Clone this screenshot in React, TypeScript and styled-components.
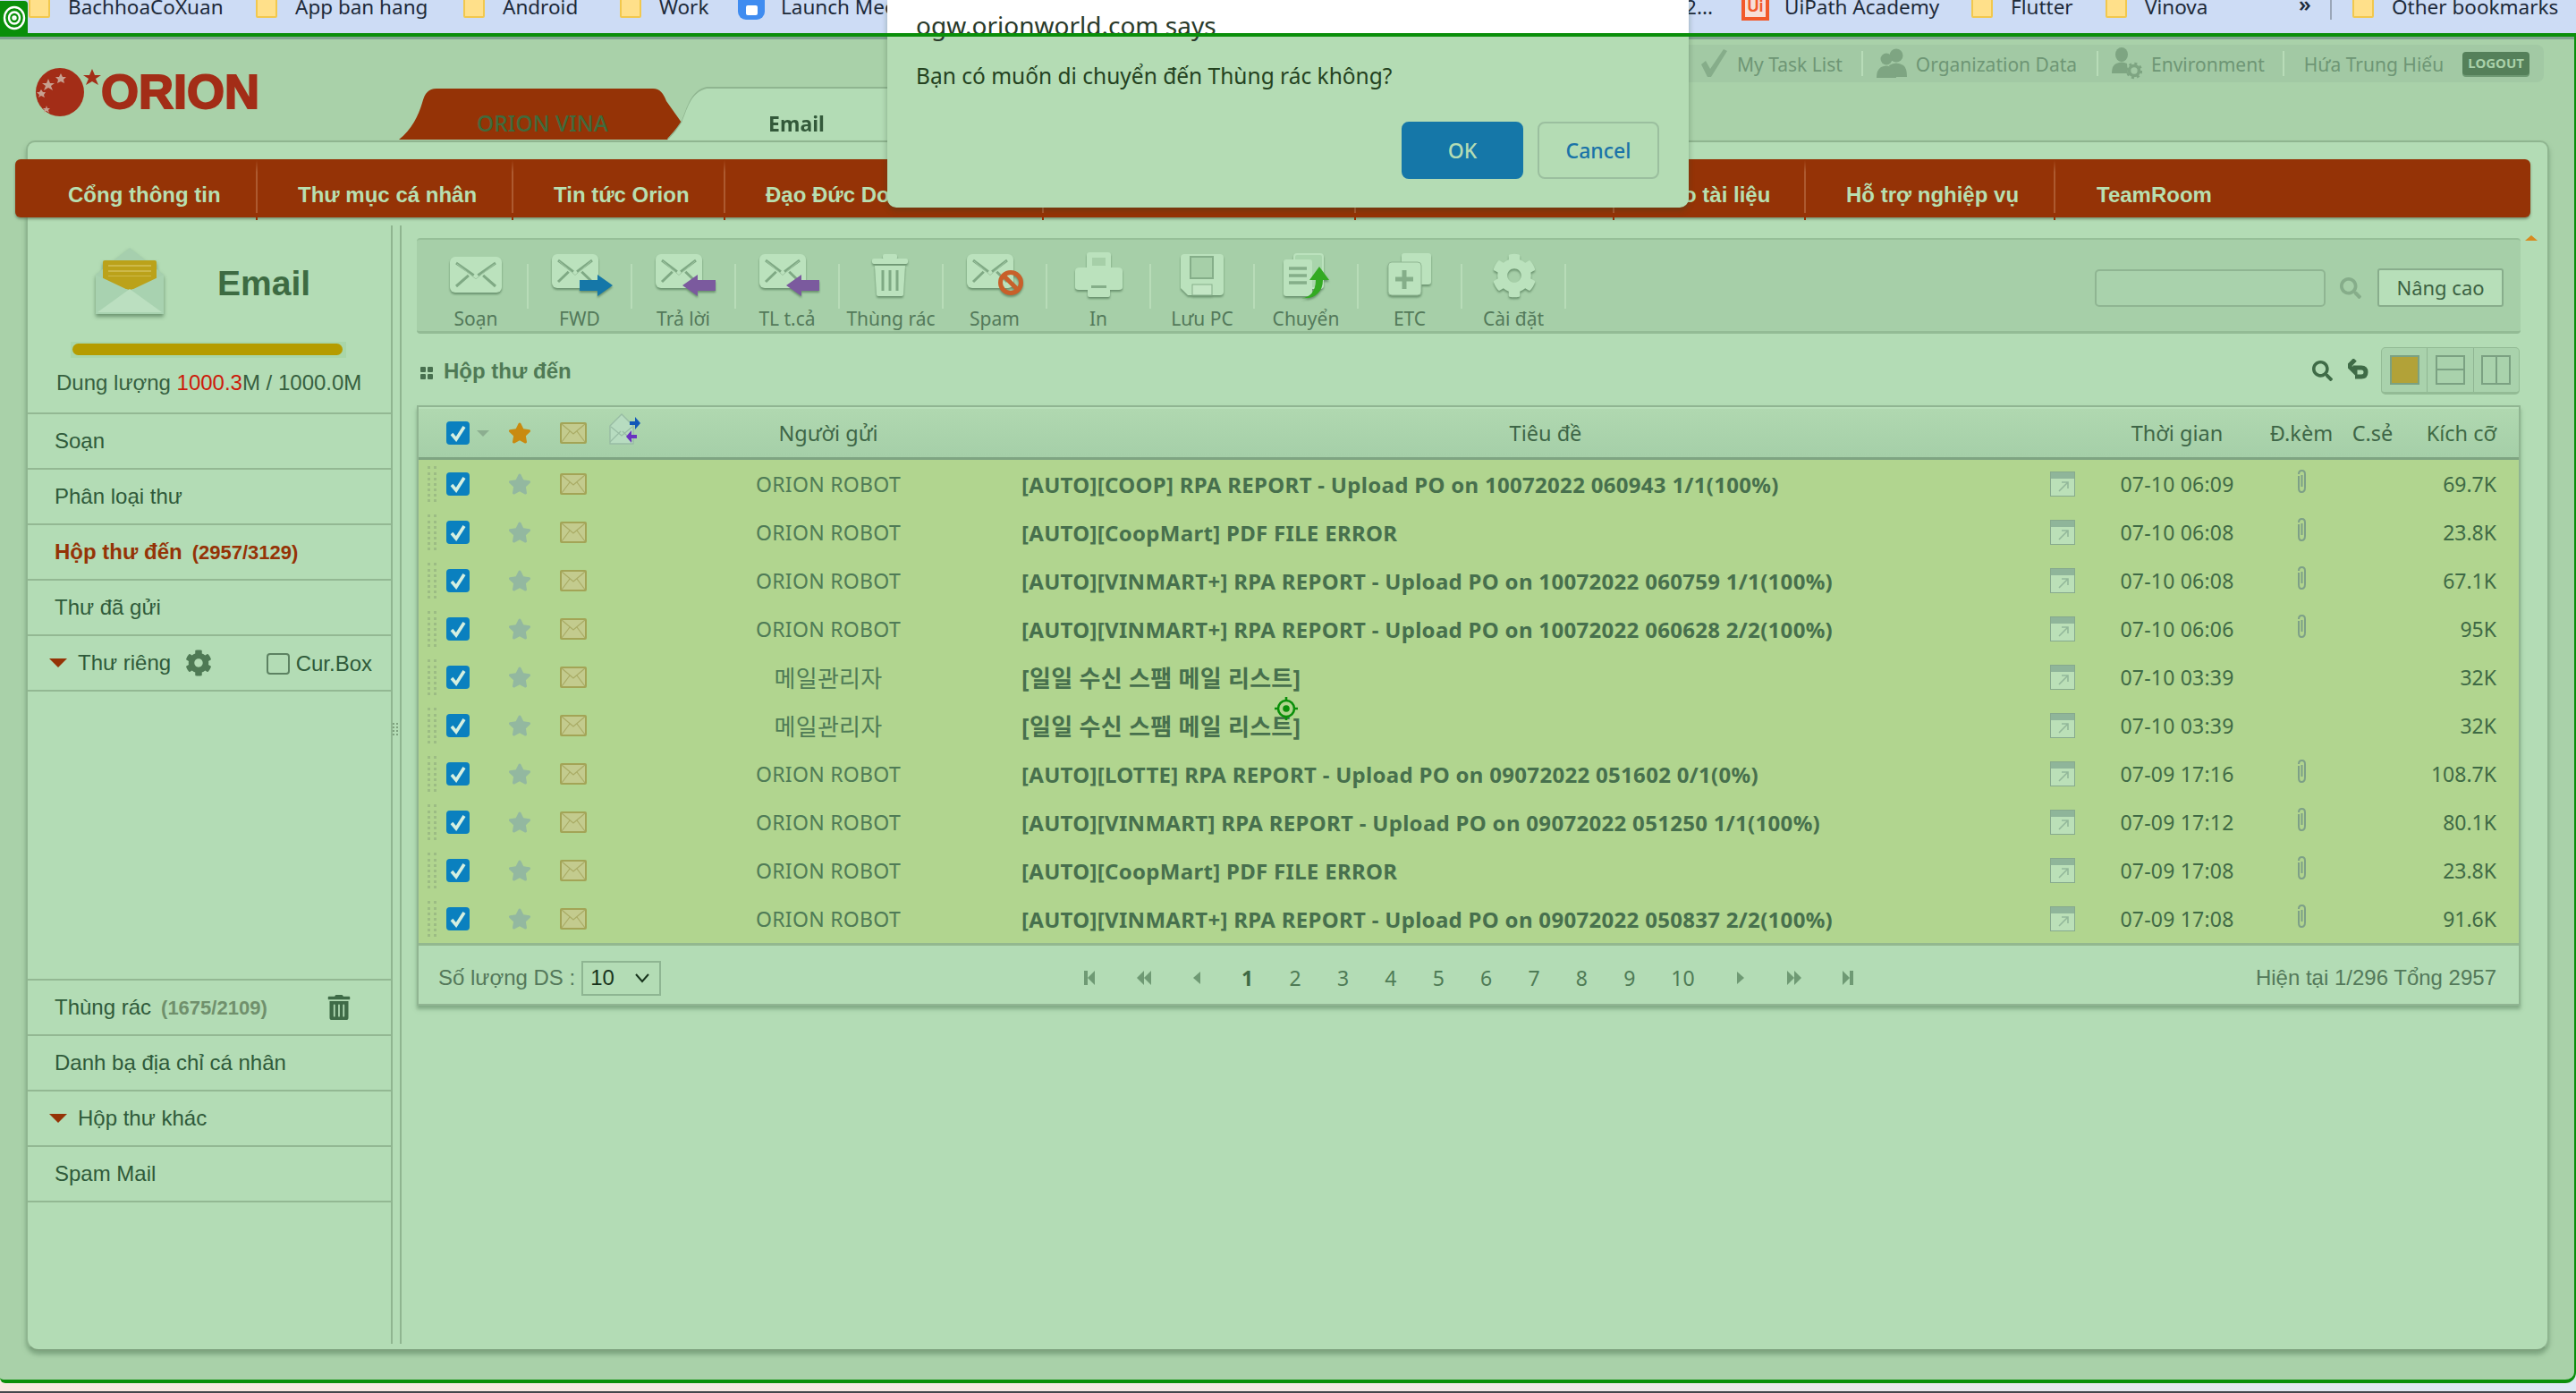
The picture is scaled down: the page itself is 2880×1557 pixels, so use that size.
import React from "react";
import styled, { createGlobalStyle } from "styled-components";
import { FaCog, FaStar, FaTrashAlt, FaSearch } from "react-icons/fa";

const MG = `"Noto Sans", "Noto Sans CJK KR", sans-serif`;
const AR = `"Liberation Sans", Arial, sans-serif`;

const Global = createGlobalStyle`
  html, body { margin: 0; padding: 0; overflow: hidden; background: #f8e8e0; }
  * { box-sizing: border-box; }
`;

const Page = styled.div`
  position: relative; width: 2880px; height: 1557px; overflow: hidden;
  display: flex; flex-direction: column; font-family: ${MG};
  background: linear-gradient(90deg, #f8e8e0 0%, #f4e8e4 50%, #dce8f4 100%);
`;

/* ---------- browser bookmarks ---------- */
const BookmarkBar = styled.div`
  height: 37px; flex: none; background: #cddcf5; display: flex; padding-left: 32px; overflow: hidden;
`;
const Bookmark = styled.div<{ $w?: number; $end?: boolean }>`
  flex: none; width: ${p => (p.$w ? `${p.$w}px` : "auto")}; height: 24px; margin-top: -4px;
  display: flex; align-items: center; gap: 20px; white-space: nowrap;
  justify-content: ${p => (p.$end ? "flex-end" : "flex-start")};
  padding-right: ${p => (p.$end ? "32px" : "0")};
  font-size: 22.5px; color: #1d2a3a; line-height: 24px;
`;
const Folder = styled.span`
  flex: none; width: 24px; height: 26px; margin-top: -2px; background: #ffe08a; border: 2px solid #f2c84c; border-radius: 2px;
`;
const ZoomIcon = styled.span`
  flex: none; align-self: flex-start; width: 30px; height: 26px; background: #3f8cf0; border-radius: 0 0 9px 9px;
  display: flex; align-items: flex-end; justify-content: center; padding-bottom: 5px; margin-right: -2px;
  &::before { content: ""; width: 13px; height: 11px; background: #fff; border-radius: 2px; }
`;
const UiIcon = styled.span`
  flex: none; align-self: flex-start; width: 31px; height: 27px; border: 4px solid #f2592a; border-top: 0;
  color: #f2592a; font: 700 18px/22px ${AR}; text-align: center; background: #f7dfd8; margin-right: -3px;
`;
const Chevrons = styled.span`
  flex: none; width: 35px; font-size: 24px; font-weight: 600; color: #1d2a3a; height: 24px; margin-top: -8px; line-height: 24px;
`;
const BarDivider = styled.span`
  flex: none; width: 2px; height: 22px; background: #9aa6b8; margin-right: 23px;
`;
const TargetBadge = styled.div`
  position: absolute; z-index: 8; left: 0; top: 1px; width: 31px; height: 38px; background: #0a8f0a;
  border-radius: 0 4px 0 0; display: flex; align-items: center; justify-content: center;
`;
const TopLine = styled.div`
  position: absolute; z-index: 7; left: 0; right: 0; top: 37px; height: 4px; background: #0a8f0a;
`;

/* ---------- frame ---------- */
const Frame = styled.div`
  flex: none; height: 1509px; background: #a9d1a9; border-top: 4px solid #0a8f0a; border-right: 2px solid #0a8f0a;
  border-bottom: 4px solid #0a8f0a; border-radius: 0 0 12px 6px; display: flex; flex-direction: column;
`;
const TopEdge = styled.div`
  height: 3px; flex: none; background: #7fa38f;
`;
const Header = styled.div`
  height: 113px; flex: none; display: flex; padding-left: 38px;
`;
const Logo = styled.div`
  flex: none; width: 252px; height: 56px; margin-top: 30px; display: flex; align-items: center; gap: 0;
`;
const LogoWord = styled.span`
  font: 700 54px/54px ${AR}; color: #a32d17; -webkit-text-stroke: 2px #a32d17; margin-left: -1px;
`;
const Tabs = styled.div`
  flex: none; margin-left: 156px; align-self: flex-end; display: flex; height: 58px;
`;
const RedTab = styled.div`
  flex: none; width: 316px; height: 57px; background: #953306; color: #3f6b3c;
  clip-path: path("M0 57 C14 46 22 30 26 16 C29 5 33 0 42 0 L284 0 C292 0 296 6 299 14 L316 38 L300 57 Z");
  font: 500 24.5px/78px ${MG}; text-align: center; padding-left: 5px;
`;
const EmailTabWrap = styled.div`
  flex: none; width: 296px; height: 58px; margin-left: -16px; filter: drop-shadow(0 -1.5px 0 #8fb590);
`;
const EmailTab = styled.div`
  width: 100%; height: 100%; background: #b3dcb5; color: #33593a;
  clip-path: path("M0 58 C8 50 12 44 16 38 C22 24 26 4 44 0 L296 0 L296 58 Z");
  font: 700 23px/78px ${MG}; text-align: center; padding-left: 7px; padding-right: 14px;
`;
const UserBar = styled.div`
  flex: none; margin-left: auto; margin-right: 34px; margin-top: 6px; width: 1044px; height: 42px;
  border-radius: 8px; background: #a2c9a4; display: flex; align-items: center; padding-left: 100px;
  font-size: 21px; color: #6e9675; white-space: nowrap;
`;
const UserText = styled.span<{ $plain?: boolean }>`
  margin-left: ${p => (p.$plain ? 0 : 10)}px; line-height: 42px; padding-top: 2px;
`;
const UserDivider = styled.span<{ $l: number; $r: number }>`
  flex: none; width: 2px; height: 28px; background: #b8dcb8; margin: 0 ${p => p.$r}px 0 ${p => p.$l}px;
`;
const Logout = styled.span`
  flex: none; margin-left: 21px; width: 75px; height: 26px; background: #55805a; border-radius: 4px;
  color: #a9d1a9; font: 700 15px/24px ${MG}; text-align: center; box-shadow: 0 2px 0 #6f9a74;
`;

/* ---------- panel ---------- */
const Panel = styled.div`
  position: relative; flex: none; width: 2821px; height: 1353px; margin-left: 29px; background: #b3dcb5;
  border: 2px solid #8fb590; border-bottom-color: #7fa37f; border-radius: 10px 10px 14px 14px;
  box-shadow: 0 4px 5px rgba(90, 130, 95, .55);
  display: flex; flex-direction: column; padding-top: 19px;
`;
const ScrollUp = styled.span`
  position: absolute; right: 11px; top: 104px; width: 0; height: 0;
  border-left: 7px solid transparent; border-right: 7px solid transparent; border-bottom: 6px solid #d88a20;
`;
const Nav = styled.nav`
  flex: none; height: 65px; width: 2812px; margin-left: -14px; background: #953306; border-radius: 6px;
  display: flex; box-shadow: 0 2px 3px rgba(80, 110, 80, .6);
`;
const NavItem = styled.div<{ $w: number; $pad: number; $last?: boolean }>`
  position: relative; flex: none; width: ${p => p.$w}px; padding-left: ${p => p.$pad}px; padding-top: 7px;
  font: 700 24px/65px ${AR}; color: #b8dfb0; white-space: nowrap;
  &::after {
    content: ""; display: ${p => (p.$last ? "none" : "block")}; position: absolute; right: 0; top: 1px; bottom: -3px; width: 2px;
    background: linear-gradient(#953306, #ad5a30 20%, #ad5a30 88%, #953306 88%);
  }
`;
const Body = styled.div`
  flex: 1; min-height: 0; display: flex; margin-top: 9px; margin-bottom: 6px;
`;

/* ---------- sidebar ---------- */
const Sidebar = styled.aside`
  flex: none; width: 408px; border-right: 2px solid #8fb590; display: flex; flex-direction: column;
`;
const SideHead = styled.div`
  flex: none; height: 211px; border-bottom: 2px solid #93b893; padding-top: 24px;
`;
const SideTitleRow = styled.div`
  display: flex; align-items: center; padding-left: 76px; gap: 60px; height: 78px;
`;
const SideTitle = styled.div`
  font: 700 39px/46px ${AR}; color: #3d6b42; margin-top: 4px;
`;
const StorageTrack = styled.div`
  margin: 28px 0 0 48px; width: 308px; height: 18px; background: #a9d6a9; padding: 2px 4px 3px 2px;
`;
const StorageFill = styled.div`
  height: 13px; background: #b59c00; border-radius: 7px;
`;
const StorageText = styled.div`
  margin: 13px 0 0 32px; font: 24px/30px ${AR}; color: #36603f; white-space: nowrap;
  & b { font-weight: 400; color: #cc1a0a; }
`;
const SideRow = styled.div<{ $active?: boolean }>`
  flex: none; height: 62px; border-bottom: 2px solid #93b893; display: flex; align-items: center; padding: 0 0 1px 30px;
  font: ${p => (p.$active ? 700 : 400)} 24px/30px ${AR}; color: ${p => (p.$active ? "#953306" : "#2f5a3a")}; white-space: nowrap;
`;
const Count = styled.span<{ $muted?: boolean }>`
  font: 700 22px/30px ${AR}; margin-left: 11px; color: ${p => (p.$muted ? "#70906c" : "#953306")}; padding-top: 3px;
`;
const SideSpacer = styled.div`
  flex: none; height: 323px; border-bottom: 2px solid #93b893;
`;
const Caret = styled.span`
  flex: none; width: 0; height: 0; margin: 0 12px 0 -6px;
  border-left: 10px solid transparent; border-right: 10px solid transparent; border-top: 10px solid #953306;
`;
const GearWrap = styled.span`
  display: flex; margin-left: 16px; color: #4f7a55; font-size: 30px;
`;
const CurBoxWrap = styled.label`
  margin-left: auto; display: flex; align-items: center; margin-right: 21px; padding-top: 3px;
`;
const CurBox = styled.span`
  width: 26px; height: 24px; border: 2px solid #5d8262; border-radius: 4px; margin-right: 7px; background: transparent;
`;
const TrashWrap = styled.span`
  display: flex; margin-left: auto; margin-right: 44px; color: #3f6b47; font-size: 28px;
`;

/* ---------- splitter ---------- */
const Splitter = styled.div`
  flex: none; width: 10px; border-right: 2px solid #8fb590; display: flex; align-items: center; justify-content: center;
  padding-bottom: 124px; padding-right: 2px;
  &::before { content: ""; width: 5px; height: 14px; border-left: 2px dotted #7fa37f; border-right: 2px dotted #7fa37f; }
`;

/* ---------- content ---------- */
const Content = styled.main`
  flex: none; width: 2399px; padding: 14px 30px 0 17px;
`;
const Toolbar = styled.div`
  height: 107px; background: #a6cfa8; border-radius: 4px; border-top: 2px solid #96bf98; border-bottom: 3px solid #93bb95;
  display: flex; padding-left: 9px; align-items: flex-start;
`;
const Tool = styled.div`
  position: relative; flex: none; width: 116px; padding-top: 15px; text-align: center;
  &::after { content: ""; position: absolute; right: 0; top: 27px; width: 2px; height: 50px; background: #b8dcb8; }
`;
const ToolIcon = styled.svg`
  display: block; width: 116px; height: 52px; overflow: visible; filter: drop-shadow(0 2px 1px rgba(90, 130, 95, .8));
`;
const ToolLabel = styled.div`
  margin-top: 7px; font-size: 21px; line-height: 28px; color: #53795a; white-space: nowrap; padding-right: 2px;
`;
const SearchArea = styled.div`
  margin-left: auto; margin-right: 19px; margin-top: 32px; display: flex; align-items: center;
`;
const SearchInput = styled.div`
  width: 258px; height: 42px; border: 2px solid #8fb592; border-radius: 5px; background: #a9d2ac;
`;
const SearchGlass = styled.span`
  display: flex; color: #86ad8a; font-size: 24px; margin: 0 18px 0 16px;
`;
const Advanced = styled.div`
  width: 141px; height: 43px; border: 2px solid #88ad8c; border-radius: 3px; background: #b7dfb9; color: #3c6243;
  font-size: 22px; line-height: 38px; text-align: center;
`;
const TitleRow = styled.div`
  height: 80px; display: flex; align-items: center; padding: 0 1px 0 4px;
`;
const Title = styled.div`
  font: 700 24px/30px ${AR}; color: #4f7a55; display: flex; align-items: center; gap: 11px; margin-top: 4px;
`;
const Bullet = styled.span`
  width: 15px; height: 14px; display: grid; grid-template-columns: 6px 6px; gap: 2px; margin-top: 3px;
  &::before, &::after { content: ""; height: 6px; background: #48704f; border-radius: 1px; box-shadow: 0 8px 0 #48704f; }
`;
const Tools = styled.div`
  margin-left: auto; display: flex; align-items: center; margin-top: 2px;
`;
const TitleGlass = styled.span`
  display: flex; color: #3f6b47; font-size: 23px; margin-right: 17px;
`;
const ViewGroup = styled.div`
  margin-left: 13px; width: 155px; height: 53px; background: #a9d2ac; border: 1px solid #93bb95; border-bottom-width: 3px; border-radius: 5px; display: flex;
`;
const ViewCell = styled.div<{ $last?: boolean }>`
  flex: 1; display: flex; align-items: center; justify-content: center; border-right: ${p => (p.$last ? "0" : "1px solid #8fb592")};
`;
const ViewBox = styled.div<{ $kind: "full" | "rows" | "cols" }>`
  width: 33px; height: 33px; border: 2px solid #7ba182;
  background: ${p =>
    p.$kind === "full" ? "#b2a238" :
    p.$kind === "rows" ? "linear-gradient(#7ba182,#7ba182) 0 50%/100% 2px no-repeat" :
    "linear-gradient(#7ba182,#7ba182) 50% 0/2px 100% no-repeat"};
`;

/* ---------- table ---------- */
const Table = styled.div`
  height: 671px; border: 2px solid #90b592; box-shadow: 0 4px 4px rgba(90, 130, 95, .55); display: flex; flex-direction: column;
`;
const cols = "29px 63px 58px 62px 110px 272px 1218px 70px 168px 110px 49px 139px";
const HeadRow = styled.div`
  flex: none; height: 59px; display: grid; grid-template-columns: ${cols}; align-items: center;
  background: linear-gradient(#b0d8b0, #a5cfa8); border-bottom: 3px solid #7ea482; border-top: 2px solid #b8dfb9;
  font-size: 23.5px; color: #3e6647; white-space: nowrap;
`;
const DataRow = styled.div`
  flex: none; height: 54px; display: grid; grid-template-columns: ${cols}; align-items: center; background: #b1d58f;
  font-size: 23px; color: #4f7b56; white-space: nowrap;
`;
const Rows = styled.div`
  flex: none; border-bottom: 3px solid #93b88f;
`;
const Handle = styled.span`
  display: block; width: 10px; height: 40px; margin-left: 10px;
  border-left: 3px dotted #9cbc84; border-right: 3px dotted #9cbc84;
`;
const CheckBox = styled.span`
  display: flex; align-items: center; justify-content: center; width: 26px; height: 26px; margin-left: 2px;
  background: #0a80bf; border-radius: 4px;
`;
const Centered = styled.span`
  text-align: center; display: block;
`;
const Sender = styled.span<{ $ko: boolean }>`
  text-align: center; display: block; font-size: ${p => (p.$ko ? 26 : 23)}px; letter-spacing: .3px;
`;
const Subject = styled.span<{ $ko: boolean }>`
  padding-left: 80px; font-weight: 700; font-size: ${p => (p.$ko ? 26 : 24)}px; letter-spacing: .3px; color: #47704d;
`;
const HeadSubject = styled.span`
  padding-left: 114px; text-align: center; display: block;
`;
const Time = styled.span`
  text-align: center; display: block; color: #3f6a45; font-size: 23px; letter-spacing: .2px;
`;
const Size = styled.span`
  text-align: right; display: block; padding-right: 25px; color: #3f6a45;
`;
const StarWrap = styled.span<{ $head?: boolean }>`
  display: flex; margin-left: 8px; font-size: 26px; color: ${p => (p.$head ? "#c98a10" : "#93b8a0")};
`;
const CheckHeadWrap = styled.span`
  display: flex; align-items: center; gap: 8px;
`;
const SortCaret = styled.span`
  width: 0; height: 0; border-left: 7px solid transparent; border-right: 7px solid transparent; border-top: 7px solid #8cae90;
`;
const EnvBox = styled.span<{ $l?: number }>`
  display: flex; margin-left: ${p => p.$l ?? 8}px;
`;
const Footer = styled.div`
  flex: 1; display: grid; grid-template-columns: 720px 1fr auto; align-items: center; color: #507a57; font-size: 23px;
  background: #b3dcb5; white-space: nowrap; padding-top: 7px;
`;
const PerPage = styled.div`
  display: flex; align-items: center; padding-left: 22px; font: 24px/30px ${AR}; color: #54785a;
`;
const Select = styled.div`
  margin-left: 7px; width: 89px; height: 39px; border: 2px solid #8eb592; display: flex; align-items: center;
  justify-content: space-between; padding: 0 10px 0 8px; color: #17331c; font: 24px/30px ${AR};
`;
const Pager = styled.div`
  display: flex; align-items: center; padding-left: 1px;
`;
const PageCell = styled.div<{ $w: number; $on?: boolean }>`
  flex: none; width: ${p => p.$w}px; display: flex; justify-content: center; font-size: 23px;
  font-weight: ${p => (p.$on ? 700 : 400)}; color: ${p => (p.$on ? "#3f6a45" : "#4f7b56")};
`;
const Total = styled.div`
  padding-right: 25px; font: 24px/30px ${AR}; color: #53795a;
`;

/* ---------- dialog ---------- */
const Dialog = styled.div`
  position: absolute; z-index: 6; left: 992px; top: 0; width: 896px; height: 232px; background: #b4dcb4;
  border-radius: 0 0 10px 10px; box-shadow: 0 3px 6px rgba(40, 70, 40, .35);
`;
const DialogHead = styled.div`
  height: 41px; background: linear-gradient(#fff 37px, #b4dcb4 37px); padding-left: 32px;
  font-size: 28px; line-height: 56px; color: #2a3a2a; white-space: nowrap;
`;
const DialogMsg = styled.div`
  margin: 28px 0 0 32px; font-size: 24.5px; line-height: 32px; color: #24421f; white-space: nowrap;
`;
const DialogBtns = styled.div`
  margin-top: 35px; padding-right: 33px; display: flex; justify-content: flex-end; gap: 16px;
`;
const DialogBtn = styled.div<{ $primary?: boolean }>`
  width: 136px; height: 64px; border-radius: 8px; text-align: center; font-size: 23px; font-weight: 500; line-height: 60px;
  background: ${p => (p.$primary ? "#1577a8" : "#b4dcb4")}; color: ${p => (p.$primary ? "#b4dcb4" : "#1a73a8")};
  border: 2px solid ${p => (p.$primary ? "#1577a8" : "#9bbf9f")};
`;
const Cursor = styled.svg`
  position: absolute; z-index: 9; left: 1424px; top: 778px; width: 28px; height: 28px;
`;
const Bottom = styled.div`
  flex: 1; display: flex; flex-direction: column; justify-content: flex-end;
  &::after { content: ""; height: 2px; background: #44474c; }
`;

/* ---------- drawings ---------- */
const Env = ({ x, y, w, h }: { x: number; y: number; w: number; h: number }) => (
  <g transform={`translate(${x} ${y})`}>
    <rect width={w} height={h} rx="6" fill="#bbe2bd" />
    <path d={`M7 7 L${w * 0.46} ${h * 0.52} M${w - 7} 7 L${w * 0.54} ${h * 0.52} M7 ${h - 7} L${w * 0.36} ${h * 0.52} M${w - 7} ${h - 7} L${w * 0.64} ${h * 0.52}`} stroke="#7fa984" strokeWidth="3" fill="none" />
    <path d={`M8 8 L${w / 2} ${h * 0.62} L${w - 8} 8`} stroke="#9fc7a2" strokeWidth="1" fill="none" />
  </g>
);
const ArrowR = ({ x, y, c }: { x: number; y: number; c: string }) => (
  <polygon transform={`translate(${x} ${y})`} points="0,6 20,6 20,0 37,12 20,24 20,18 0,18" fill={c} />
);
const ArrowL = ({ x, y, c }: { x: number; y: number; c: string }) => (
  <polygon transform={`translate(${x} ${y})`} points="37,6 17,6 17,0 0,12 17,24 17,18 37,18" fill={c} />
);
const toolIcons: Record<string, React.ReactNode> = {
  compose: <Env x={28} y={4} w={58} h={40} />,
  fwd: <><Env x={26} y={1} w={52} h={38} /><ArrowR x={57} y={24} c="#1577a8" /></>,
  reply: <><Env x={26} y={1} w={52} h={38} /><ArrowL x={56} y={24} c="#7b5a9e" /></>,
  trash: (
    <g fill="#bbe2bd">
      <rect x="36" y="6" width="40" height="6" rx="2" /><rect x="48" y="1" width="16" height="6" rx="2" />
      <path d="M39 14 H73 L71 46 Q71 48 68 48 H44 Q41 48 41 46 Z" />
      <path d="M48 19 V42 M56 19 V42 M64 19 V42" stroke="#7fa984" strokeWidth="3" />
    </g>
  ),
  spam: (
    <>
      <Env x={26} y={1} w={52} h={38} />
      <circle cx="75" cy="33" r="11.5" fill="none" stroke="#c8602a" strokeWidth="5" />
      <path d="M67 25 L83 41" stroke="#c8602a" strokeWidth="5" />
    </>
  ),
  print: (
    <g>
      <path d="M31 20 Q31 16 36 16 H79 Q84 16 84 20 V38 Q84 41 80 41 H35 Q31 41 31 38 Z" fill="#bbe2bd" />
      <rect x="44" y="-1" width="27" height="20" rx="3" fill="#bbe2bd" /><rect x="50" y="5" width="15" height="9" fill="#a6cfa8" />
      <rect x="45" y="34" width="25" height="15" rx="2" fill="#bbe2bd" /><rect x="49" y="36" width="17" height="3" fill="#85ae89" />
    </g>
  ),
  save: (
    <g>
      <path d="M33 5 Q33 1 37 1 H77 Q81 1 81 5 V43 Q81 47 77 47 H41 L33 39 Z" fill="#bbe2bd" />
      <rect x="44" y="4" width="25" height="24" fill="#a6cfa8" stroke="#85ae89" strokeWidth="2" />
      <rect x="46" y="35" width="22" height="12" fill="#c4e6c5" stroke="#85ae89" strokeWidth="1" />
    </g>
  ),
  move: (
    <g>
      <rect x="44" y="1" width="32" height="38" rx="3" fill="#a9d5ac" stroke="#bbe2bd" strokeWidth="2" />
      <rect x="32" y="7" width="32" height="41" rx="3" fill="#bbe2bd" />
      <path d="M38 17 H58 M38 25 H58 M38 33 H58" stroke="#85ae89" strokeWidth="3.5" />
      <path d="M52 50 C62 50 68 42 68 30 H61 L72 15 L83 30 H76 C76 44 66 52 52 50 Z" fill="#33aa22" />
    </g>
  ),
  etc: (
    <g>
      <rect x="48" y="0" width="33" height="35" rx="3" fill="#bbe2bd" />
      <rect x="33" y="10" width="37" height="37" rx="4" fill="#bbe2bd" stroke="#8fb592" strokeWidth="1" />
      <path d="M51 19 V40 M41 29 H61" stroke="#85ae89" strokeWidth="5" />
    </g>
  ),
};
const Clip = () => (
  <svg width="14" height="28" viewBox="0 0 14 28" fill="none" stroke="#7da087" strokeWidth="2">
    <path d="M4 8 V21 Q4 26 7 26 Q11 26 11 21 V6 Q11 2 7.5 2 Q4 2 4 6" /><path d="M7.5 7 V20" />
  </svg>
);
const OpenIcon = () => (
  <svg width="28" height="28" viewBox="0 0 28 28">
    <rect x="0" y="0" width="28" height="28" fill="#bbe0b8" stroke="#86a98e" strokeWidth="2" />
    <rect x="1" y="1" width="26" height="7" fill="#8fb59a" />
    <path d="M10 22 L20 12 M13 12 H20 V19" stroke="#93b89a" strokeWidth="1.6" fill="none" />
  </svg>
);
const MailIcon = () => (
  <svg width="30" height="24" viewBox="0 0 30 24">
    <rect x="1" y="1" width="28" height="22" rx="1" fill="#c3cb8e" stroke="#a3a456" strokeWidth="2" />
    <path d="M2 2 L15 13 L28 2 M2 22 L11 10 M28 22 L19 10" stroke="#a9ab65" strokeWidth="1.2" fill="none" />
  </svg>
);
const Tick = () => (
  <svg width="20" height="20" viewBox="0 0 20 20">
    <path d="M3 11 L8 17 L17 3" stroke="#d5efe0" strokeWidth="3.6" fill="none" />
  </svg>
);
const InOut = () => (
  <svg width="36" height="42" viewBox="0 0 36 42">
    <path d="M2 16 L15 3 L28 16 V36 H2 Z" fill="#b7dcc0" stroke="#98bca4" strokeWidth="1.4" />
    <path d="M2 34 L14 22 M28 34 L16 22 M3 17 L15 27 L27 17" stroke="#98bca4" strokeWidth="1.2" fill="none" />
    <polygon points="24,11 30,11 30,6 36,13 30,20 30,15 24,15" fill="#1158b8" />
    <polygon points="32,26 26,26 26,21 20,28 26,35 26,30 32,30" fill="#6a32c0" />
  </svg>
);
const GroupIcon = () => (
  <svg width="34" height="34" viewBox="0 0 34 34" fill="#7ea582">
    <circle cx="22" cy="8" r="7.5" />
    <path d="M14 19 Q22 14 30 19 Q34 22 34 32 H20 Z" />
    <circle cx="11" cy="12" r="6.5" />
    <path d="M0 33 Q0 24 5 21 Q11 18 17 21 Q22 24 22 33 Z" />
  </svg>
);
const PersonGearIcon = () => (
  <svg width="34" height="36" viewBox="0 0 34 36" fill="#7ea582">
    <ellipse cx="11" cy="8" rx="7" ry="8" />
    <path d="M0 29 Q0 20 5 18 Q11 15 17 18 L18 29 Z" />
    <circle cx="25" cy="26" r="5.5" fill="none" stroke="#7ea582" strokeWidth="3.6" />
    <circle cx="25" cy="26" r="8" fill="none" stroke="#7ea582" strokeWidth="2.4" strokeDasharray="3 3.3" />
  </svg>
);
const PagerIcon = ({ k }: { k: "first" | "prev2" | "prev" | "next" | "next2" | "last" }) => {
  const base = {
    first: <><rect x="3" y="2" width="4" height="16" /><polygon points="15,2 15,18 7,10" /></>,
    prev2: <><polygon points="11,2 11,18 3,10" /><polygon points="19,2 19,18 11,10" /></>,
    prev: <polygon points="14,3 14,17 6,10" />,
    next: <polygon points="6,3 6,17 14,10" />,
    next2: <><polygon points="1,2 1,18 9,10" /><polygon points="9,2 9,18 17,10" /></>,
    last: <><polygon points="5,2 5,18 13,10" /><rect x="13" y="2" width="4" height="16" /></>,
  }[k];
  return <svg width="20" height="20" viewBox="0 0 20 20" fill="#6f9a74">{base}</svg>;
};

/* ---------- data ---------- */
const navItems = [
  ["Cổng thông tin", 271, 59], ["Thư mục cá nhân", 286, 45], ["Tin tức Orion", 237, 45], ["Đạo Đức Doanh Nghiệp", 356, 45],
  ["Quản lý công việc", 349, 45], ["Sổ tay Orion", 289, 45], ["Kho tài liệu", 214, 45], ["Hỗ trợ nghiệp vụ", 279, 45],
] as const;
const tools = [
  ["compose", "Soạn"], ["fwd", "FWD"], ["reply", "Trả lời"], ["reply", "TL t.cả"], ["trash", "Thùng rác"], ["spam", "Spam"],
  ["print", "In"], ["save", "Lưu PC"], ["move", "Chuyển"], ["etc", "ETC"], ["gear", "Cài đặt"],
];
const rows = [
  ["ORION ROBOT", "[AUTO][COOP] RPA REPORT - Upload PO on 10072022 060943 1/1(100%)", "07-10 06:09", true, "69.7K"],
  ["ORION ROBOT", "[AUTO][CoopMart] PDF FILE ERROR", "07-10 06:08", true, "23.8K"],
  ["ORION ROBOT", "[AUTO][VINMART+] RPA REPORT - Upload PO on 10072022 060759 1/1(100%)", "07-10 06:08", true, "67.1K"],
  ["ORION ROBOT", "[AUTO][VINMART+] RPA REPORT - Upload PO on 10072022 060628 2/2(100%)", "07-10 06:06", true, "95K"],
  ["메일관리자", "[일일 수신 스팸 메일 리스트]", "07-10 03:39", false, "32K"],
  ["메일관리자", "[일일 수신 스팸 메일 리스트]", "07-10 03:39", false, "32K"],
  ["ORION ROBOT", "[AUTO][LOTTE] RPA REPORT - Upload PO on 09072022 051602 0/1(0%)", "07-09 17:16", true, "108.7K"],
  ["ORION ROBOT", "[AUTO][VINMART] RPA REPORT - Upload PO on 09072022 051250 1/1(100%)", "07-09 17:12", true, "80.1K"],
  ["ORION ROBOT", "[AUTO][CoopMart] PDF FILE ERROR", "07-09 17:08", true, "23.8K"],
  ["ORION ROBOT", "[AUTO][VINMART+] RPA REPORT - Upload PO on 09072022 050837 2/2(100%)", "07-09 17:08", true, "91.6K"],
] as const;

export default function App() {
  return (
    <Page>
      <Global />
      <BookmarkBar>
        <Bookmark $w={254}><Folder />BachhoaCoXuan</Bookmark>
        <Bookmark $w={232}><Folder />App ban hang</Bookmark>
        <Bookmark $w={175}><Folder />Android</Bookmark>
        <Bookmark $w={132}><Folder />Work</Bookmark>
        <Bookmark $w={435}><ZoomIcon />Launch Meeting</Bookmark>
        <Bookmark $w={687} $end>Report 2...</Bookmark>
        <Bookmark $w={257}><UiIcon>Ui</UiIcon>UiPath Academy</Bookmark>
        <Bookmark $w={150}><Folder />Flutter</Bookmark>
        <Bookmark $w={216}><Folder />Vinova</Bookmark>
        <Chevrons>»</Chevrons>
        <BarDivider />
        <Bookmark><Folder />Other bookmarks</Bookmark>
      </BookmarkBar>
      <TargetBadge>
        <svg width="26" height="28" viewBox="0 0 26 28" fill="none" stroke="#fff" strokeWidth="2.4">
          <ellipse cx="13" cy="14" rx="11" ry="12" /><ellipse cx="13" cy="14" rx="6" ry="6.5" /><circle cx="13" cy="14" r="1.5" />
        </svg>
      </TargetBadge>
      <TopLine />
      <Frame>
        <TopEdge />
        <Header>
          <Logo>
            <svg width="76" height="56" viewBox="0 0 76 56">
              <circle cx="29" cy="29" r="27" fill="#a32d17" />
              <g fill="#c7a090">
                <polygon points="16,14 18,19 23,19 19,22 21,27 16,24 11,27 13,22 9,19 14,19" />
                <polygon points="30,8 32,12 36,12 33,15 34,19 30,17 26,19 27,15 24,12 28,12" />
                <polygon points="8,26 10,29 13,29 11,32 12,35 8,33 5,35 6,32 3,29 6,29" />
                <polygon points="14,44 15,47 18,47 16,49 17,52 14,50 11,52 12,49 10,47 13,47" />
              </g>
              <polygon points="65,3 68,10 75,10 69,14 72,21 65,17 58,21 61,14 55,10 62,10" fill="#a32d17" />
            </svg>
            <LogoWord>ORION</LogoWord>
          </Logo>
          <Tabs>
            <RedTab>ORION VINA</RedTab>
            <EmailTabWrap><EmailTab>Email</EmailTab></EmailTabWrap>
          </Tabs>
          <UserBar>
            <svg width="32" height="32" viewBox="0 0 32 32"><path d="M2 17 L7 13 L12 22 L27 0 L31 2 L13 31 L9 31 Z" fill="#86ad8a" /></svg>
            <UserText>My Task List</UserText>
            <UserDivider $l={21} $r={15} />
            <GroupIcon />
            <UserText>Organization Data</UserText>
            <UserDivider $l={22} $r={15} />
            <PersonGearIcon />
            <UserText>Environment</UserText>
            <UserDivider $l={20} $r={22} />
            <UserText $plain>Hứa Trung Hiếu</UserText>
            <Logout>LOGOUT</Logout>
          </UserBar>
        </Header>
        <Panel>
          <ScrollUp />
          <Nav>
            {navItems.map(([t, w, pad]) => <NavItem key={t} $w={w} $pad={pad}>{t}</NavItem>)}
            <NavItem $w={530} $pad={46} $last>TeamRoom</NavItem>
          </Nav>
          <Body>
            <Sidebar>
              <SideHead>
                <SideTitleRow>
                  <svg width="76" height="76" viewBox="0 0 76 76" style={{ filter: "drop-shadow(0 3px 2px rgba(90,130,95,.8))" }}>
                    <path d="M38 0 L76 30 V72 Q76 74 73 74 H3 Q0 74 0 72 V30 Z" fill="#a6cfae" />
                    <rect x="8" y="14" width="60" height="32" rx="2" fill="#bba21a" />
                    <path d="M14 20 H62 M14 26 H62 M14 32 H62" stroke="#cdb949" strokeWidth="2" />
                    <path d="M8 40 L38 47 L68 40 V32 H8 Z" fill="#bba21a" />
                    <path d="M0 30 L38 48 L76 30 V74 H0 Z" fill="#a8d2b0" />
                    <path d="M2 72 L38 46 L74 72 Z" fill="#bbdfc0" />
                  </svg>
                  <SideTitle>Email</SideTitle>
                </SideTitleRow>
                <StorageTrack><StorageFill /></StorageTrack>
                <StorageText>Dung lượng <b>1000.3</b>M / 1000.0M</StorageText>
              </SideHead>
              <SideRow>Soạn</SideRow>
              <SideRow>Phân loại thư</SideRow>
              <SideRow $active>Hộp thư đến<Count>(2957/3129)</Count></SideRow>
              <SideRow>Thư đã gửi</SideRow>
              <SideRow>
                <Caret />Thư riêng
                <GearWrap><FaCog /></GearWrap>
                <CurBoxWrap><CurBox />Cur.Box</CurBoxWrap>
              </SideRow>
              <SideSpacer />
              <SideRow>
                Thùng rác<Count $muted>(1675/2109)</Count>
                <TrashWrap><FaTrashAlt /></TrashWrap>
              </SideRow>
              <SideRow>Danh bạ địa chỉ cá nhân</SideRow>
              <SideRow><Caret />Hộp thư khác</SideRow>
              <SideRow>Spam Mail</SideRow>
            </Sidebar>
            <Splitter />
            <Content>
              <Toolbar>
                {tools.map(([k, label], i) => (
                  <Tool key={i}>
                    {k === "gear" ? (
                      <ToolIcon as="div"><FaCog size={50} color="#bbe2bd" /></ToolIcon>
                    ) : (
                      <ToolIcon viewBox="0 0 116 52">{toolIcons[k]}</ToolIcon>
                    )}
                    <ToolLabel>{label}</ToolLabel>
                  </Tool>
                ))}
                <SearchArea>
                  <SearchInput />
                  <SearchGlass><FaSearch /></SearchGlass>
                  <Advanced>Nâng cao</Advanced>
                </SearchArea>
              </Toolbar>
              <TitleRow>
                <Title><Bullet />Hộp thư đến</Title>
                <Tools>
                  <TitleGlass><FaSearch /></TitleGlass>
                  <svg width="24" height="26" viewBox="0 0 24 26">
                    <path d="M8 1 L1 8 L8 15 V10 H15 Q20 10 20 15 Q20 20 15 20 H8" fill="none" stroke="#3f6b47" strokeWidth="5" />
                  </svg>
                  <ViewGroup>
                    <ViewCell><ViewBox $kind="full" /></ViewCell>
                    <ViewCell><ViewBox $kind="rows" /></ViewCell>
                    <ViewCell $last><ViewBox $kind="cols" /></ViewCell>
                  </ViewGroup>
                </Tools>
              </TitleRow>
              <Table>
                <HeadRow>
                  <span />
                  <CheckHeadWrap><CheckBox><Tick /></CheckBox><SortCaret /></CheckHeadWrap>
                  <StarWrap $head><FaStar /></StarWrap>
                  <EnvBox><MailIcon /></EnvBox>
                  <span><InOut /></span>
                  <Centered>Người gửi</Centered>
                  <HeadSubject>Tiêu đề</HeadSubject>
                  <span />
                  <Centered>Thời gian</Centered>
                  <Centered>Đ.kèm</Centered>
                  <Centered>C.sẻ</Centered>
                  <Size>Kích cỡ</Size>
                </HeadRow>
                <Rows>
                  {rows.map((r, i) => {
                    const ko = !r[3];
                    return (
                      <DataRow key={i}>
                        <Handle />
                        <CheckBox><Tick /></CheckBox>
                        <StarWrap><FaStar /></StarWrap>
                        <EnvBox><MailIcon /></EnvBox>
                        <span />
                        <Sender $ko={ko}>{r[0]}</Sender>
                        <Subject $ko={ko}>{r[1]}</Subject>
                        <EnvBox $l={12}><OpenIcon /></EnvBox>
                        <Time>{r[2]}</Time>
                        <Centered>{r[3] ? <Clip /> : null}</Centered>
                        <span />
                        <Size>{r[4]}</Size>
                      </DataRow>
                    );
                  })}
                </Rows>
                <Footer>
                  <PerPage>
                    Số lượng DS :
                    <Select>10
                      <svg width="18" height="12" viewBox="0 0 18 12"><path d="M2 2 L9 10 L16 2" fill="none" stroke="#17331c" strokeWidth="2" /></svg>
                    </Select>
                  </PerPage>
                  <Pager>
                    <PageCell $w={59}><PagerIcon k="first" /></PageCell>
                    <PageCell $w={60}><PagerIcon k="prev2" /></PageCell>
                    <PageCell $w={60}><PagerIcon k="prev" /></PageCell>
                    {[1, 2, 3, 4, 5, 6, 7, 8, 9].map(n => <PageCell key={n} $w={53.4} $on={n === 1}>{n}</PageCell>)}
                    <PageCell $w={66}>10</PageCell>
                    <PageCell $w={62}><PagerIcon k="next" /></PageCell>
                    <PageCell $w={60}><PagerIcon k="next2" /></PageCell>
                    <PageCell $w={56}><PagerIcon k="last" /></PageCell>
                  </Pager>
                  <Total>Hiện tại 1/296 Tổng 2957</Total>
                </Footer>
              </Table>
            </Content>
          </Body>
        </Panel>
      </Frame>
      <Bottom />
      <Dialog>
        <DialogHead>ogw.orionworld.com says</DialogHead>
        <DialogMsg>Bạn có muốn di chuyển đến Thùng rác không?</DialogMsg>
        <DialogBtns>
          <DialogBtn $primary>OK</DialogBtn>
          <DialogBtn>Cancel</DialogBtn>
        </DialogBtns>
      </Dialog>
      <Cursor viewBox="0 0 28 28" fill="none" stroke="#0a8f0a" strokeWidth="2.6">
        <circle cx="14" cy="14" r="9" /><circle cx="14" cy="14" r="2.5" fill="#0a8f0a" />
        <path d="M14 1 V6 M14 22 V27 M1 14 H6 M22 14 H27" />
      </Cursor>
    </Page>
  );
}
